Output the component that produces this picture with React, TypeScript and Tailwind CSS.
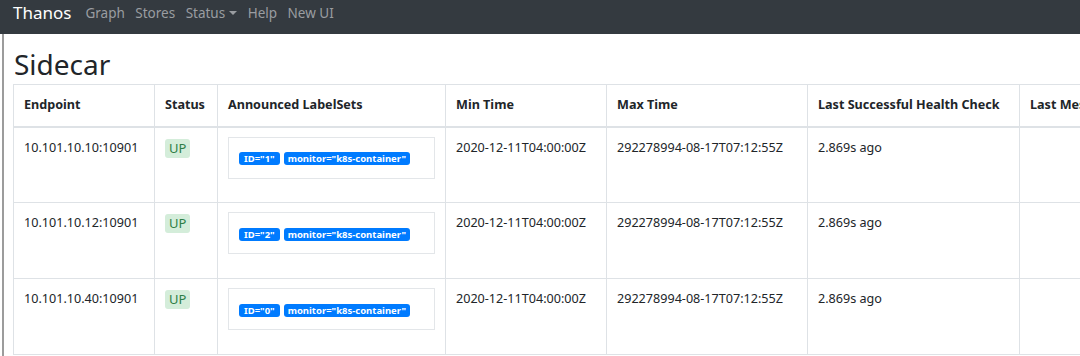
import React from "react";

const rows = [
  { ep: "10.101.10.10:10901", id: "1" },
  { ep: "10.101.10.12:10901", id: "2" },
  { ep: "10.101.10.40:10901", id: "0" },
];

const cols = [
  { t: "Endpoint", w: "w-[141px]" },
  { t: "Status", w: "w-[63px]" },
  { t: "Announced LabelSets", w: "w-[228px]" },
  { t: "Min Time", w: "w-[161px]" },
  { t: "Max Time", w: "w-[201px]" },
  { t: "Last Successful Health Check", w: "w-[212px]" },
  { t: "Last Message", w: "w-[160px]" },
];

export default function App() {
  return (
    <div className="w-[1080px] h-[356px] overflow-hidden bg-white font-['Segoe_UI','Noto_Sans',sans-serif] text-[#212529]">
      <nav className="h-[34px] bg-[#343a40] flex items-start pt-[2px] pl-[13px]">
        <span className="text-white text-[17px] leading-[22px] mr-[14px]">Thanos</span>
        <div className="flex items-center gap-[10.5px] text-[13.5px] leading-[22px] text-[#9a9da1]">
          <span>Graph</span>
          <span>Stores</span>
          <span className="flex items-center gap-[4px]">
            Status
            <span className="inline-block w-0 h-0 border-l-[4px] border-r-[4px] border-t-[4px] border-l-transparent border-r-transparent border-t-[#9a9da1]" />
          </span>
          <span>Help</span>
          <span>New UI</span>
        </div>
      </nav>
      <div className="ml-[2px] border-l-2 border-[#9c9c9c] h-[322px] pl-[9px]">
        <h1 className="text-[28px] leading-[34px] pt-[13px] pb-[3px] pl-[1px] font-normal">Sidecar</h1>
        <table className="table-fixed border-collapse w-[1166px] text-[12.6px]">
          <thead>
            <tr className="h-[42px]">
              {cols.map((c) => (
                <th
                  key={c.t}
                  className={`${c.w} border border-[#dee2e6] border-b-2 text-left font-bold px-[10px] align-middle whitespace-nowrap overflow-hidden`}
                >
                  {c.t}
                </th>
              ))}
            </tr>
          </thead>
          <tbody>
            {rows.map((r) => (
              <tr key={r.ep} className="h-[76px]">
                <td className="border border-[#dee2e6] px-[10px] pt-[11px] align-top">{r.ep}</td>
                <td className="border border-[#dee2e6] px-[10px] pt-[11px] align-top">
                  <span className="inline-block bg-[#d4edda] text-[#2e7d46] rounded-[3px] px-[4px] text-[13px] leading-[19px]">
                    UP
                  </span>
                </td>
                <td className="border border-[#dee2e6] px-[10px] pt-[9px] align-top">
                  <div className="border border-[#e3e6e9] h-[42px] w-[207px] flex items-center pl-[10px] gap-[4px] pt-[2px]">
                    <span className="bg-[#007bff] text-white font-bold text-[9.5px] leading-[13px] rounded-[3px] px-[5px]">
                      ID="{r.id}"
                    </span>
                    <span className="bg-[#007bff] text-white font-bold text-[9.5px] leading-[13px] rounded-[3px] px-[4px]">
                      monitor="k8s-container"
                    </span>
                  </div>
                </td>
                <td className="border border-[#dee2e6] px-[10px] pt-[11px] align-top">2020-12-11T04:00:00Z</td>
                <td className="border border-[#dee2e6] px-[10px] pt-[11px] align-top">292278994-08-17T07:12:55Z</td>
                <td className="border border-[#dee2e6] px-[10px] pt-[11px] align-top">2.869s ago</td>
                <td className="border border-[#dee2e6] px-[10px] pt-[11px] align-top"></td>
              </tr>
            ))}
          </tbody>
        </table>
      </div>
    </div>
  );
}
